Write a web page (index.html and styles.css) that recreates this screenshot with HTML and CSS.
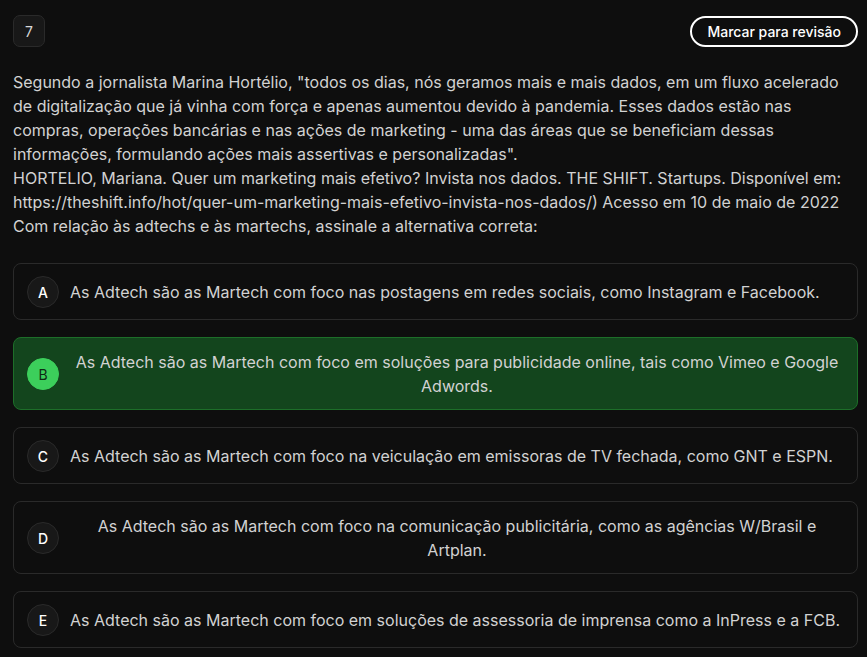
FILE: index.html
```html
<!DOCTYPE html>
<html>
<head>
    <meta charset="UTF-8">
    <title>Questão 7</title>
    <link rel="stylesheet" href="styles.css">
</head>
<body>
    <div class="container">
        <div class="top-bar">
            <span class="question-number">7</span>
            <button type="button" class="review-button">Marcar para revisão</button>
        </div>

        <p class="statement">Segundo a jornalista Marina Hortélio, "todos os dias, nós geramos mais e mais dados, em um fluxo acelerado de digitalização que já vinha com força e apenas aumentou devido à pandemia. Esses dados estão nas compras, operações bancárias e nas ações de marketing - uma das áreas que se beneficiam dessas informações, formulando ações mais assertivas e personalizadas".<br>HORTELIO, Mariana. Quer um marketing mais efetivo? Invista nos dados. THE SHIFT. Startups. Disponível em: https://theshift.info/hot/quer-um-marketing-mais-efetivo-invista-nos-dados/) Acesso em 10 de maio de 2022<br>Com relação às adtechs e às martechs, assinale a alternativa correta:</p>

        <div class="options">
            <div class="option">
                <span class="letter">A</span>
                <span class="option-text">As Adtech são as Martech com foco nas postagens em redes sociais, como Instagram e Facebook.</span>
            </div>
            <div class="option selected">
                <span class="letter">B</span>
                <span class="option-text">As Adtech são as Martech com foco em soluções para publicidade online, tais como Vimeo e Google Adwords.</span>
            </div>
            <div class="option">
                <span class="letter">C</span>
                <span class="option-text">As Adtech são as Martech com foco na veiculação em emissoras de TV fechada, como GNT e ESPN.</span>
            </div>
            <div class="option">
                <span class="letter">D</span>
                <span class="option-text">As Adtech são as Martech com foco na comunicação publicitária, como as agências W/Brasil e Artplan.</span>
            </div>
            <div class="option">
                <span class="letter">E</span>
                <span class="option-text">As Adtech são as Martech com foco em soluções de assessoria de imprensa como a InPress e a FCB.</span>
            </div>
        </div>
    </div>
</body>
</html>
```

FILE: styles.css
```css
body {
    margin: 0;
    background-color: #0e0e0e;
    font-family: Inter, "Noto Sans", sans-serif;
    color: #d2d2d2;
}

.container {
    padding: 15px 9px 20px 13px;
}

.top-bar {
    display: flex;
    justify-content: space-between;
    align-items: center;
}

.question-number {
    width: 30px;
    height: 30px;
    display: flex;
    align-items: center;
    justify-content: center;
    background-color: #181818;
    border: 1px solid #2a2a2a;
    border-radius: 7px;
    font-size: 14px;
    color: #d8d8d8;
}

.review-button {
    background: transparent;
    color: #fff;
    border: 2px solid #fff;
    border-radius: 999px;
    padding: 0 15px;
    height: 31px;
    font-family: Inter, "Noto Sans", sans-serif;
    font-size: 14px;
    font-weight: 500;
    cursor: pointer;
}

.statement {
    margin: 23px 0 25px;
    font-size: 16px;
    line-height: 24px;
}

.options {
    display: flex;
    flex-direction: column;
    gap: 17px;
}

.option {
    display: flex;
    align-items: center;
    gap: 11px;
    padding: 12px 13px 11px;
    border: 1px solid #2a2a2a;
    border-radius: 8px;
}

.option.selected {
    background-color: #13451d;
    border-color: #1d6e29;
}

.letter {
    flex: none;
    width: 30px;
    height: 30px;
    display: flex;
    align-items: center;
    justify-content: center;
    border-radius: 50%;
    background-color: #181818;
    border: 1px solid #2a2a2a;
    color: #fff;
    font-size: 14px;
    font-weight: 500;
}

.selected .letter {
    background-color: #3ccf5b;
    border-color: #3ccf5b;
    color: #0e2a14;
    font-weight: 400;
}

.option-text {
    text-align: center;
    font-size: 16px;
    line-height: 24px;
}
```
